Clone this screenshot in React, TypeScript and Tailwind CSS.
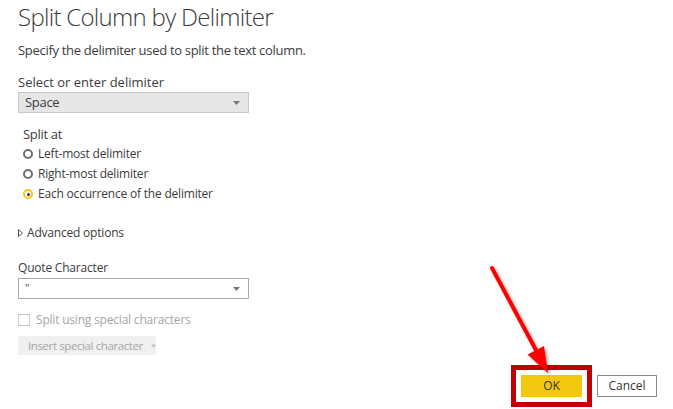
import React from "react"

const font = { fontFamily: '"Open Sans", "Noto Sans", Arial, sans-serif' }

function Caret({ className = "" }: { className?: string }) {
  return (
    <svg width="7" height="4" viewBox="0 0 7 4" className={className}>
      <path d="M0 0 H7 L3.5 4 Z" fill="currentColor" />
    </svg>
  )
}

function Radio({ label, checked }: { label: string; checked?: boolean }) {
  return (
    <div className="flex h-5 items-center gap-[5px]">
      <span
        className={
          "flex h-[10px] w-[10px] items-center justify-center rounded-full border-2 " +
          (checked ? "border-[#f2c811]" : "border-[#6e6e6e]")
        }
      >
        {checked && <span className="h-[3px] w-[3px] rounded-full bg-[#333]" />}
      </span>
      <span className="text-[12px] tracking-[-0.2px]">{label}</span>
    </div>
  )
}

export default function App() {
  return (
    <div
      style={font}
      className="relative flex h-[409px] w-[673px] flex-col overflow-hidden bg-white pl-[18px] text-[13px] tracking-[-0.3px] text-[#3b3b3b]"
    >
      <h1 className="text-[24px] font-light leading-[33px] tracking-[-0.7px] text-[#3b3b3b]">
        Split Column by Delimiter
      </h1>
      <p className="mt-[7px] leading-5">Specify the delimiter used to split the text column.</p>

      <div className="mt-[12px] leading-5 tracking-[0px]">Select or enter delimiter</div>
      <div className="flex h-[21px] w-[231px] items-center justify-between border border-[#c8c8c8] bg-[#e6e6e6] pl-[6px] pr-[8px]">
        <span>Space</span>
        <Caret className="text-[#777]" />
      </div>

      <div className="mt-[11px] pl-[5px]">
        <div className="leading-5">Split at</div>
        <Radio label="Left-most delimiter" />
        <Radio label="Right-most delimiter" />
        <Radio label="Each occurrence of the delimiter" checked />
      </div>

      <div className="mt-[19px] flex items-center gap-[4px] leading-5">
        <svg width="5" height="8" viewBox="0 0 5 8">
          <path d="M0.5 0.5 L4.5 4 L0.5 7.5 Z" fill="none" stroke="#555" strokeWidth="1" />
        </svg>
        <span className="text-[12px] tracking-[-0.2px]">Advanced options</span>
      </div>

      <div className="mt-[15px] text-[12px] leading-5 tracking-[-0.2px]">Quote Character</div>
      <div className="flex h-[21px] w-[231px] items-center justify-between border border-[#aaa] bg-white pl-[6px] pr-[8px]">
        <span className="text-[11px]">"</span>
        <Caret className="text-[#777]" />
      </div>

      <div className="mt-[11px] flex items-center gap-[6px] leading-5 text-[#a6a6a6]">
        <span className="h-[12px] w-[12px] border border-[#c8c8c8]" />
        <span className="text-[12px] tracking-[-0.2px]">Split using special characters</span>
      </div>
      <div className="mt-[6px] flex h-[19px] w-[138px] items-center gap-[8px] whitespace-nowrap bg-[#f0f0f0] pl-[10px] text-[11.5px] tracking-[-0.4px] text-[#a6a6a6]">
        <span>Insert special character</span>
        <Caret className="text-[#bbb]" />
      </div>

      <div className="mt-auto mb-[2px] flex items-center justify-end gap-[5px] pr-[16px] tracking-normal">
        <div className="border-[5px] border-[#c00000] p-[5px]">
          <button className="flex h-[22px] w-[61px] items-center justify-center bg-[#f2c811] text-[12px] text-[#333]">
            OK
          </button>
        </div>
        <button className="flex h-[22px] w-[60px] items-center justify-center border border-[#8a8a8a] bg-white text-[12px] text-[#333]">
          Cancel
        </button>
      </div>

      <svg className="pointer-events-none absolute left-0 top-0" width="673" height="409">
        <defs>
          <filter id="sh" x="-50%" y="-50%" width="200%" height="200%">
            <feDropShadow dx="2" dy="2" stdDeviation="1.5" floodColor="#000" floodOpacity="0.35" />
          </filter>
        </defs>
        <g filter="url(#sh)">
          <line x1="492" y1="268" x2="537" y2="352" stroke="#ff0000" strokeWidth="4" strokeLinecap="round" />
          <polygon points="527.5,354.5 544,346 548,373" fill="#ff0000" />
        </g>
      </svg>
    </div>
  )
}
